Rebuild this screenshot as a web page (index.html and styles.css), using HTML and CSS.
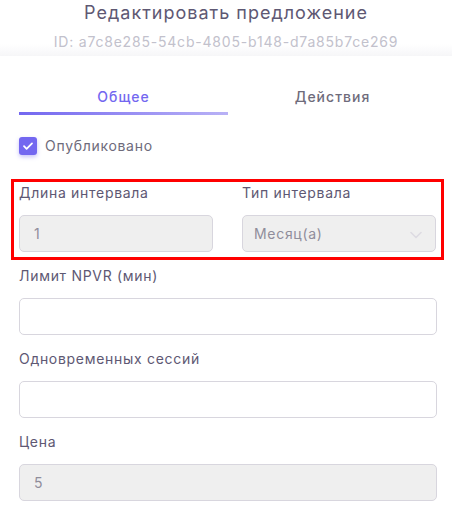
FILE: index.html
```html
<!DOCTYPE html>
<html lang="ru">
<head>
<meta charset="utf-8">
<link rel="stylesheet" href="styles.css">
</head>
<body>
<div class="modal">
  <header class="modal-header">
    <h1 class="title">Редактировать предложение</h1>
    <div class="subtitle">ID: a7c8e285-54cb-4805-b148-d7a85b7ce269</div>
  </header>
  <section class="modal-body">
    <nav class="tabs">
      <div class="tab active">Общее</div>
      <div class="tab">Действия</div>
    </nav>
    <label class="check">
      <span class="box"><svg viewBox="0 0 18 18" width="18" height="18"><path d="M5 9.2l2.6 2.6L13 6.4" fill="none" stroke="#fff" stroke-width="1.8" stroke-linecap="round" stroke-linejoin="round"/></svg></span>
      <span class="check-label">Опубликовано</span>
    </label>
    <div class="highlight">
      <div class="row">
        <div class="group">
          <div class="label">Длина интервала</div>
          <div class="input disabled">1</div>
        </div>
        <div class="group">
          <div class="label">Тип интервала</div>
          <div class="input disabled select">Месяц(а)
            <svg class="chev" viewBox="0 0 12 8" width="12" height="8"><path d="M1 1.5l5 5 5-5" fill="none" stroke="#dddbe2" stroke-width="1.6" stroke-linecap="round" stroke-linejoin="round"/></svg>
          </div>
        </div>
      </div>
    </div>
    <div class="group stack">
      <div class="label">Лимит NPVR (мин)</div>
      <div class="input"></div>
    </div>
    <div class="group stack">
      <div class="label">Одновременных сессий</div>
      <div class="input"></div>
    </div>
    <div class="group stack">
      <div class="label">Цена</div>
      <div class="input disabled">5</div>
    </div>
  </section>
</div>
</body>
</html>
```
FILE: styles.css
```css
* { box-sizing: border-box; }
html, body { margin: 0; padding: 0; background: #fff; }
body {
  font-family: Inter, "Open Sans", sans-serif;
  color: #5e5873;
  width: 452px;
  height: 508px;
  overflow: hidden;
  letter-spacing: 0.7px;
}
.modal-header {
  height: 56px;
  text-align: center;
  background: linear-gradient(to bottom, #ffffff 0, #ffffff 44px, #f6f6f8 56px);
}
.title {
  margin: 0;
  padding-top: 2px;
  font-size: 18px;
  line-height: 22px;
  font-weight: 400;
  color: #5e5873;
  letter-spacing: 1px;
}
.subtitle {
  margin-top: 9px;
  font-size: 14px;
  line-height: 18px;
  color: #c2c1cc;
  letter-spacing: 0.8px;
}
.modal-body {
  background: #fff;
  border-radius: 6px 6px 0 0;
  padding: 31px 15px 0 19px;
}
.tabs { display: flex; }
.tab {
  flex: 1;
  text-align: center;
  font-size: 14px;
  line-height: 20px;
  padding: 0 0 5px;
  font-weight: 500;
  color: #6e6b7b;
  letter-spacing: 1px;
  border-bottom: 3px solid transparent;
}
.tab.active {
  color: #7367f0;
  border-image: linear-gradient(to right, #7367f0, #b9b2f6) 1;
}
.check {
  display: flex;
  align-items: center;
  gap: 8px;
  margin-top: 21px;
}
.box {
  width: 18px;
  height: 18px;
  border-radius: 3px;
  background: #7367f0;
  box-shadow: 0 2px 4px rgba(115, 103, 240, 0.4);
  display: flex;
}
.check-label { font-size: 14px; line-height: 20px; color: #6e6b7b; }
.highlight {
  margin: 23px -7px 0 -8px;
  border: 3px solid #ff0000;
  padding: 1px 5px 5px 5px;
}
.row { display: flex; gap: 29px; }
.row .group { flex: 1; }
.label {
  font-size: 14px;
  line-height: 20px;
  color: #5e5873;
  margin-bottom: 12px;
}
.input {
  height: 37px;
  border: 1px solid #d8d6de;
  border-radius: 5px;
  background: #fff;
  font-size: 14px;
  line-height: 35px;
  padding: 0 14px;
  color: #6e6b7b;
  position: relative;
}
.input.disabled { background: #efefef; color: #8f8d9b; }
.select { padding-left: 11px; }
.chev { position: absolute; right: 13px; top: 15px; }
.stack { margin-top: 6px; }
.stack + .stack { margin-top: 14px; }
```
